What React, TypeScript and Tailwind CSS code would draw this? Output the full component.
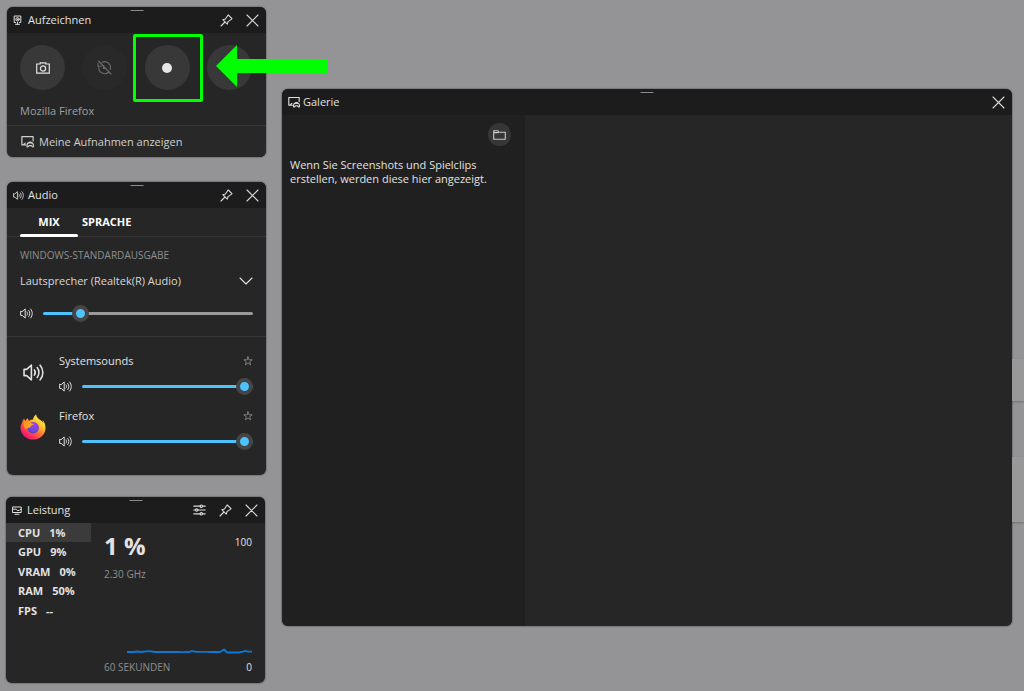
import React, { useState } from 'react'

const iconProps = {
  fill: 'none',
  stroke: 'currentColor',
  strokeLinecap: 'round',
  strokeLinejoin: 'round',
} as const

const CaptureIcon = () => (
  <svg width="9" height="10" viewBox="0 0 9 10" {...iconProps} strokeWidth="1">
    <path d="M2.500 7.500H1.200V1h6.600v6.500H6.500M2.500 9.300h4M4.500 7.500v1.800" />
    <circle cx="4.500" cy="4.300" r="1.700" />
    <circle cx="4.500" cy="4.300" r="0.400" fill="currentColor" />
  </svg>
)

const GalleryIcon = ({ size = 12 }: { size?: number }) => (
  <svg width={size} height={size} viewBox="0 0 12 12" {...iconProps} strokeWidth="1.100">
    <path d="M4.300 9.200H.8V1.500h10.400V5.500M2 9.200l1.800-1.700" />
    <path d="M6.900 7.200h3.200c.9 0 1.400 2 1.400 3.200 0 .8-.8.9-1.300.2l-.6-.8H7.400l-.6.800c-.5.700-1.300.6-1.300-.2 0-1.200.5-3.200 1.400-3.200z" />
    <path d="M7.200 7.200c0-1 2.600-1 2.600 0" />
  </svg>
)

const SpeakerIcon = ({ size = 13 }: { size?: number }) => (
  <svg width={size} height={size} viewBox="0 0 20 20" {...iconProps} strokeWidth="1.500">
    <path d="M1 7v6h2.500l4.500 4V3L3.500 7z" />
    <path d="M10.800 7.500c1 1.400 1 3.600 0 5M13.500 5.300c2.200 2.700 2.200 6.700 0 9.400M16.300 3c3.500 4 3.500 10 0 14" />
  </svg>
)

const MonitorIcon = () => (
  <svg width="10" height="9" viewBox="0 0 10 9" {...iconProps} strokeWidth="1">
    <path d="M.8 1h8.400v5.500H.8zM3 8.300h4" />
    <path d="M1 3.200h3.200l1 1.300h2l.8-1H9" />
  </svg>
)

const SettingsIcon = () => (
  <svg width="13" height="12" viewBox="0 0 13 12" {...iconProps} strokeWidth="1.200">
    <path d="M.8 2.200h6.400M9.500 2.200h2.700M.8 6h1.700M5 6h7.200M.8 9.800h6.400M9.500 9.800h2.700" />
    <circle cx="8.300" cy="2.200" r="1.200" />
    <circle cx="3.700" cy="6" r="1.200" />
    <circle cx="8.300" cy="9.800" r="1.200" />
  </svg>
)

const PinIcon = () => (
  <svg width="13" height="13" viewBox="0 0 13 13" {...iconProps} strokeWidth="1.100">
    <path d="M8.300 1l3.700 3.700-.7.700-3.300 2.200-.7 2.600-4.500-4.500 2.600-.7 2.200-3.300zM5 8L1 12" />
  </svg>
)

const CloseIcon = () => (
  <svg width="13" height="13" viewBox="0 0 13 13" {...iconProps} strokeWidth="1.100">
    <path d="M1 1l11 11M12 1L1 12" />
  </svg>
)

const CameraIcon = () => (
  <svg width="14" height="12" viewBox="0 0 14 12" {...iconProps} strokeLinejoin="miter" strokeWidth="1.200">
    <path d="M.7 2h3.500V.9h5.600V2h3.500v9.200H.7z" />
    <circle cx="7" cy="6.500" r="2.600" />
  </svg>
)

const ReplayOffIcon = () => (
  <svg width="15" height="15" viewBox="0 0 15 15" {...iconProps} strokeWidth="1.100">
    <path d="M5 2.200A6 6 0 0 1 13.200 9.500M11.800 12A6 6 0 0 1 1.700 7.500M1 3.200v3h3M1.500 1l12.500 13M6.500 5.500v3h2.500" />
  </svg>
)

const FolderIcon = () => (
  <svg width="13" height="10" viewBox="0 0 13 10" {...iconProps} strokeLinejoin="miter" strokeWidth="1.100">
    <path d="M.7 9.300V.8h4.200l1 1.400h6.400v7.100zM.7 2.600h4.600" />
  </svg>
)

const ChevronIcon = () => (
  <svg width="14" height="8" viewBox="0 0 14 8" {...iconProps} strokeWidth="1.100">
    <path d="M1 1l6 6 6-6" />
  </svg>
)

const StarIcon = () => (
  <svg width="10" height="10" viewBox="0 0 10 10" {...iconProps} strokeWidth="0.800">
    <path d="M5 .8l1.100 3h3.100L6.700 5.700l.9 3.100L5 7 2.400 8.800l.9-3.100L.8 3.800h3.100z" />
  </svg>
)

const FirefoxLogo = () => (
  <svg width="26" height="26" viewBox="0 0 26 26">
    <defs>
      <linearGradient id="fx-body" x1="0.850" y1="0.100" x2="0.200" y2="0.900">
        <stop offset="0" stopColor="#fff44f" />
        <stop offset="0.300" stopColor="#ffc02f" />
        <stop offset="0.550" stopColor="#ff7139" />
        <stop offset="0.800" stopColor="#ff3750" />
        <stop offset="1" stopColor="#e5157f" />
      </linearGradient>
      <radialGradient id="fx-globe" cx="0.600" cy="0.300" r="0.800">
        <stop offset="0" stopColor="#a33df0" />
        <stop offset="0.600" stopColor="#6a4be0" />
        <stop offset="1" stopColor="#4b35a8" />
      </radialGradient>
      <linearGradient id="fx-head" x1="0" y1="0" x2="1" y2="1">
        <stop offset="0" stopColor="#ff8a16" />
        <stop offset="1" stopColor="#ffb62e" />
      </linearGradient>
    </defs>
    <path
      fill="url(#fx-body)"
      d="M16.200.4c-1.900 1.100-3 3.200-3.200 5.200-1.500 0-2.800.4-4 1.100C8.200 6 7.900 5 8 4.300 6.700 4.900 5.700 6 5.200 6.900c-.6-.2-.9-1.500-.8-2.300C2.900 5.900 2 8 1.700 9.500.9 10.900.5 12.200.5 13.700.5 20.200 6 25.600 13 25.600S25.500 20.400 25.500 13.700c0-3.300-1.200-6-3.100-7.700.6 1.200.9 2.200 1 3.200C22 5.500 16.800 5.400 16.200.4z"
    />
    <circle cx="13.200" cy="13.700" r="5.700" fill="url(#fx-globe)" />
    <path
      fill="url(#fx-head)"
      d="M4.500 5.200c.3 1.300.7 1.800 1.200 2 1.800-.4 3.500-.1 4.900 1 .7 1 1.500 1.500 3.400 1.600-.2 1.300-2.500 1.500-3.200 2.100-.6.700-.1 1.700-1.500 1.800-1.700 0-3 .5-3.200 1.900C3.700 13.300 2.700 10.500 4.500 5.200z"
    />
  </svg>
)

interface WidgetProps {
  title: string
  icon: React.ReactNode
  actions?: React.ReactNode
  className?: string
  children: React.ReactNode
}

const Widget: React.FC<WidgetProps> = ({ title, icon, actions, className = '', children }) => (
  <section
    aria-label={title}
    className={`flex flex-col rounded-md bg-[#262626] shadow-[0_0_1px_1px_rgba(80,80,80,0.4)] ${className}`}
  >
    <header className="relative flex h-[26px] shrink-0 items-center rounded-t-md bg-[#1c1c1c] pr-[7px] pl-1.5">
      <span className="absolute top-[3px] left-1/2 h-px w-[13px] -translate-x-1/2 bg-[#8a8a8a]" />
      <span className="flex w-[15px] shrink-0 justify-start">{icon}</span>
      <h2 className="flex-1 text-[11px] leading-4">{title}</h2>
      <div className="flex gap-[13px] text-[#d8d8d8]">
        {actions}
        <button aria-label="Schließen" className="flex h-[13px] w-[13px] items-center justify-center">
          <CloseIcon />
        </button>
      </div>
    </header>
    {children}
  </section>
)

const PinButton = () => (
  <button aria-label="Anheften" className="flex h-[13px] w-[13px] items-center justify-center">
    <PinIcon />
  </button>
)

interface VolumeSliderProps {
  label: string
  initial: number
}

const VolumeSlider: React.FC<VolumeSliderProps> = ({ label, initial }) => {
  const [value, setValue] = useState(initial)

  return (
    <input
      type="range"
      aria-label={label}
      min={0}
      max={100}
      value={value}
      onChange={(e) => setValue(Number(e.target.value))}
      style={{ '--fill': `${value}%` } as React.CSSProperties}
      className="h-[17px] min-w-0 flex-1 appearance-none bg-transparent [&::-webkit-slider-runnable-track]:h-[3px] [&::-webkit-slider-runnable-track]:rounded-full [&::-webkit-slider-runnable-track]:bg-[linear-gradient(to_right,#4cc2ff_var(--fill),#9a9a9a_var(--fill))] [&::-webkit-slider-thumb]:-mt-[7px] [&::-webkit-slider-thumb]:h-[17px] [&::-webkit-slider-thumb]:w-[17px] [&::-webkit-slider-thumb]:appearance-none [&::-webkit-slider-thumb]:rounded-full [&::-webkit-slider-thumb]:border-4 [&::-webkit-slider-thumb]:border-[#454545] [&::-webkit-slider-thumb]:bg-[#4cc2ff]"
    />
  )
}

const CaptureWidget = () => (
  <div className="relative">
    <Widget title="Aufzeichnen" icon={<CaptureIcon />} actions={<PinButton />}>
      <div className="px-[13px] pt-3 pb-1.5">
        <div className="flex justify-between pr-px">
          <button aria-label="Screenshot" className="flex h-[45px] w-[45px] items-center justify-center rounded-full bg-[#383838]">
            <CameraIcon />
          </button>
          <button
            aria-label="Letzte 30 Sekunden aufzeichnen"
            disabled
            className="flex h-[45px] w-[45px] items-center justify-center rounded-full bg-[#292929] text-[#6c6c6c]"
          >
            <ReplayOffIcon />
          </button>
          <button aria-label="Aufzeichnung starten" className="flex h-[45px] w-[45px] items-center justify-center rounded-full bg-[#383838]">
            <span className="h-2.5 w-2.5 rounded-full bg-[#e6e6e6]" />
          </button>
          <button aria-label="Mikrofon" className="h-[45px] w-[45px] rounded-full bg-[#383838]" />
        </div>
        <p className="mt-[13px] text-[11px] leading-4 text-[#a0a0a0]">Mozilla Firefox</p>
      </div>
      <a href="#galerie" className="flex h-8 items-center gap-[5px] rounded-b-md border-t border-[#363636] bg-[#282828] pl-3.5 text-[11px] leading-4 text-[#d0d0d0]">
        <GalleryIcon size={13} />
        Meine Aufnahmen anzeigen
      </a>
    </Widget>

    {/* Highlight around the record button */}
    <div className="pointer-events-none absolute top-[27px] left-[126px] h-[68px] w-[70px] rounded-xs border-3 border-[#00ff00]" />
    <svg className="pointer-events-none absolute top-[38px] left-[209px]" width="112" height="42" viewBox="0 0 112 42">
      <path d="M0 21L21 0v14h91v14H21v14z" fill="#00ff00" />
    </svg>
  </div>
)

const mixerApps = [
  { name: 'Systemsounds', icon: <SpeakerIcon size={21} /> },
  { name: 'Firefox', icon: <FirefoxLogo /> },
]

const AudioWidget = () => (
  <Widget title="Audio" icon={<SpeakerIcon size={11} />} actions={<PinButton />} className="mt-[25px]">
    <div className="flex h-[29px] border-b border-[#363636] pl-[13px] text-[11px] font-bold text-white" role="tablist">
      <button role="tab" aria-selected="true" className="relative w-[58px]">
        MIX
        <span className="absolute inset-x-0 -bottom-px h-[3px] rounded-full bg-white" />
      </button>
      <button role="tab" aria-selected="false" className="px-1">
        SPRACHE
      </button>
    </div>

    <div className="border-b border-[#363636] px-[13px] pt-2.5 pb-[14px]">
      <h3 className="text-[10px] leading-4 text-[#8e8e8e]">WINDOWS-STANDARDAUSGABE</h3>
      <div className="relative mt-2.5 flex items-center">
        <select aria-label="Ausgabegerät" className="w-full appearance-none bg-transparent text-[11px] leading-4 text-[#d8d8d8]">
          <option>Lautsprecher (Realtek(R) Audio)</option>
        </select>
        <span className="pointer-events-none absolute right-0">
          <ChevronIcon />
        </span>
      </div>
      <div className="mt-4 flex items-center gap-2.5">
        <SpeakerIcon />
        <VolumeSlider label="Gesamtlautstärke" initial={15} />
      </div>
    </div>

    <ul className="flex flex-col gap-[13px] px-[13px] pt-4 pb-[25px]">
      {mixerApps.map((app) => (
        <li key={app.name} className="flex gap-[13px]">
          <span className="mt-1.5 flex h-[26px] w-[26px] shrink-0 items-center justify-center">{app.icon}</span>
          <div className="min-w-0 flex-1">
            <div className="flex items-center justify-between text-[11px] leading-4">
              <span>{app.name}</span>
              <button aria-label={`${app.name} als Favorit`} className="text-[#909090]">
                <StarIcon />
              </button>
            </div>
            <div className="mt-[9px] flex items-center gap-2.5">
              <SpeakerIcon />
              <VolumeSlider label={`Lautstärke ${app.name}`} initial={100} />
            </div>
          </div>
        </li>
      ))}
    </ul>
  </Widget>
)

const metrics = [
  { name: 'CPU', value: '1%' },
  { name: 'GPU', value: '9%' },
  { name: 'VRAM', value: '0%' },
  { name: 'RAM', value: '50%' },
  { name: 'FPS', value: '--' },
]

const PerformanceWidget = () => {
  const [selected, setSelected] = useState('CPU')

  return (
    <Widget
      title="Leistung"
      icon={<MonitorIcon />}
      className="-ml-px mr-px mt-[22px]"
      actions={
        <>
          <button aria-label="Optionen" className="flex h-[13px] w-[13px] items-center justify-center">
            <SettingsIcon />
          </button>
          <PinButton />
        </>
      }
    >
      <div className="flex h-40">
        <div className="flex h-[97px] w-[85px] shrink-0 flex-col justify-between text-[11px] font-bold">
          {metrics.map((m) => (
            <button
              key={m.name}
              onClick={() => setSelected(m.name)}
              className={`flex h-[19px] items-center gap-[9px] pl-3 leading-4 ${selected === m.name ? 'bg-[#3b3b3b]' : ''}`}
            >
              <span>{m.name}</span>
              <span>{m.value}</span>
            </button>
          ))}
        </div>

        <div className="flex flex-1 flex-col pr-3.5 pb-2 pl-[13px]">
          <div className="flex items-start justify-between">
            <p className="mt-[7px] text-[24px] leading-8 font-bold">1 %</p>
            <span className="mt-[11px] text-[10px] leading-4">100</span>
          </div>
          <p className="mt-1 text-[10px] leading-4 text-[#8e8e8e]">2.30 GHz</p>
          <svg className="mt-auto ml-[23px]" height="12" viewBox="0 0 125 12" preserveAspectRatio="none" fill="none" stroke="#0a78d4" strokeWidth="1.800">
            <path d="M0 7h7l3-.5 4 .5 8-.8 6 .8h22l6 .2 6-.2 3-1 4 .8h10l6 .2h8l4-2.500 3 3h12l4-.8 2-.8 3 .8h4" />
          </svg>
          <div className="mt-0.5 flex justify-between text-[10px] leading-4">
            <span className="text-[#8e8e8e]">60 SEKUNDEN</span>
            <span>0</span>
          </div>
        </div>
      </div>
    </Widget>
  )
}

const GalleryWidget = () => (
  <Widget title="Galerie" icon={<GalleryIcon />} className="mt-[82px] mb-[57px] min-w-0 flex-1">
    <div id="galerie" className="flex flex-1">
      <div className="flex w-[243px] shrink-0 flex-col rounded-bl-md bg-[#202020] px-2 pt-2">
        <button aria-label="Ordner öffnen" className="mr-1.5 flex h-[23px] w-[23px] items-center justify-center self-end rounded-full bg-[#363636] text-[#c8c8c8]">
          <FolderIcon />
        </button>
        <p className="mt-3 text-[11px] leading-[14px]">
          Wenn Sie Screenshots und Spielclips
          <br />
          erstellen, werden diese hier angezeigt.
        </p>
      </div>
      <div className="flex-1 rounded-br-md bg-[#262626]" />
    </div>
  </Widget>
)

export default function App() {
  return (
    <main className="relative flex min-h-screen gap-4 bg-[#949496] pt-[7px] pr-3 pb-2 pl-[7px] font-['Open_Sans','Noto_Sans',sans-serif] text-[#e2e2e2]">
      {/* Dimmed cards of the page behind the overlay */}
      <div className="absolute top-[359px] right-0 h-[42px] w-3 bg-[#989898] shadow-[0_1px_2px_rgba(0,0,0,0.25)]" />
      <div className="absolute top-[457px] right-0 h-[65px] w-3 bg-[#989898] shadow-[0_1px_2px_rgba(0,0,0,0.25)]" />

      <div className="z-10 w-[259px] shrink-0">
        <CaptureWidget />
        <AudioWidget />
        <PerformanceWidget />
      </div>
      <GalleryWidget />
    </main>
  )
}
